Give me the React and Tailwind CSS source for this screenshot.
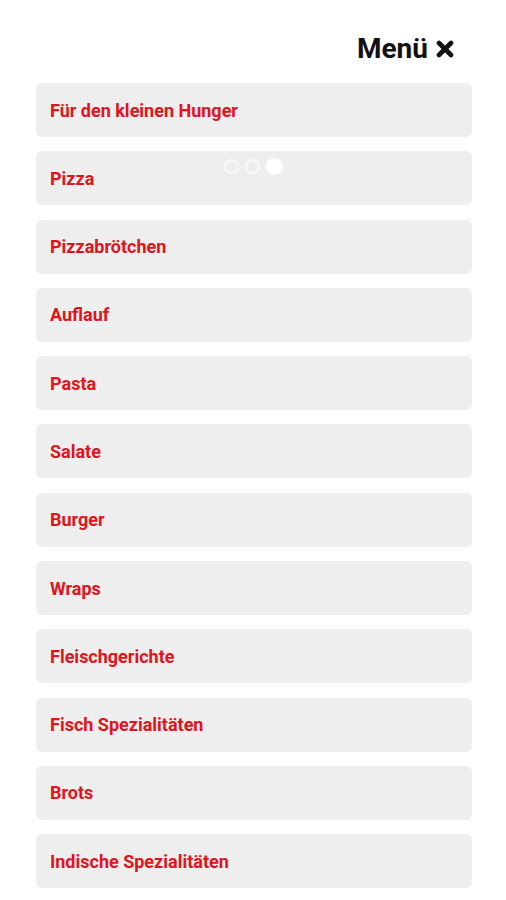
import React from "react";

const categories = [
  "Für den kleinen Hunger",
  "Pizza",
  "Pizzabrötchen",
  "Auflauf",
  "Pasta",
  "Salate",
  "Burger",
  "Wraps",
  "Fleischgerichte",
  "Fisch Spezialitäten",
  "Brots",
  "Indische Spezialitäten",
];

function CloseIcon() {
  // heavy "x" like the old icon font close glyph
  return (
    <svg width="18" height="18" viewBox="0 0 18 18" className="ml-[8px] mt-[1px]">
      <g stroke="#111" strokeWidth="4.6" strokeLinecap="round">
        <line x1="3" y1="3" x2="15" y2="15" />
        <line x1="15" y1="3" x2="3" y2="15" />
      </g>
    </svg>
  );
}

function LoadingDots() {
  return (
    <div className="absolute left-[224px] top-[158px] flex items-center gap-[6px]">
      <span className="w-[15px] h-[15px] rounded-full border-2 border-white/70"></span>
      <span className="w-[15px] h-[15px] rounded-full border-2 border-white/70"></span>
      <span className="w-[17px] h-[17px] rounded-full bg-white"></span>
    </div>
  );
}

export default function App() {
  return (
    <div className="relative w-[506px] h-[900px] bg-white font-['Roboto','Liberation_Sans',sans-serif]">
      <header className="flex justify-end items-center pt-[31px] pr-[52px] h-[66px]">
        <h2 className="text-[28px] font-bold text-[#111] leading-none">Menü</h2>
        <CloseIcon />
      </header>
      <nav className="ml-[36px] mt-[17px] w-[436px] flex flex-col gap-[14.3px]">
        {categories.map((name) => (
          <a
            key={name}
            href="#"
            className="h-[54px] flex items-center px-[14px] rounded-[6px] bg-[#eeeeee] text-[#e3131b] text-[18px] font-bold"
          >
            {name}
          </a>
        ))}
      </nav>
      <LoadingDots />
    </div>
  );
}
